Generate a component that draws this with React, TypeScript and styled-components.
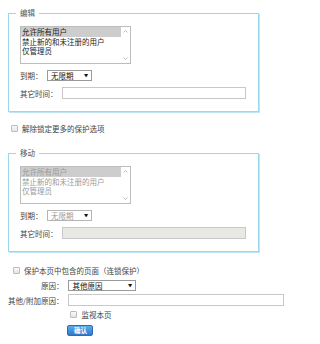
import React from "react";
import styled, { createGlobalStyle } from "styled-components";

const Global = createGlobalStyle`
  html, body { margin: 0; padding: 0; background: #fff; }
  body {
    font-family: "Noto Sans CJK SC", "Noto Sans", sans-serif;
    font-size: 7.5px;
    color: #333;
  }
  * { box-sizing: border-box; }
`;

const Page = styled.div`
  width: 320px;
  height: 344px;
  padding: 8px 0 0 8px;
  display: flex;
  flex-direction: column;
  align-items: flex-start;
`;

const Fieldset = styled.fieldset`
  margin: 0;
  width: 251px;
  padding: 8px 11px 12px 11px;
  border: 1px solid #9cd7f2;
  box-shadow: 1px 1px 0 #bfe6f8;
  display: flex;
  flex-direction: column;
  align-items: flex-start;
  min-inline-size: 0;
`;

const Legend = styled.legend`
  margin-left: -4px;
  padding: 0 4px;
  height: 10px;
  line-height: 10px;
  font-size: 7.5px;
  color: #555;
`;

const ListBox = styled.div<{ $disabled?: boolean }>`
  width: 111px;
  height: 38px;
  border: 1px solid #bdbdbd;
  background: #fff;
  display: flex;
  color: ${(p) => (p.$disabled ? "#9a9a9a" : "#222")};
`;

const Options = styled.div`
  flex: 1;
  display: flex;
  flex-direction: column;
`;

const Option = styled.div<{ $selected?: boolean }>`
  height: 9.5px;
  line-height: 9.5px;
  padding-left: 1px;
  white-space: nowrap;
  background: ${(p) => (p.$selected ? "#cdcdcd" : "transparent")};
`;

const ScrollBar = styled.div`
  width: 9px;
  display: flex;
  flex-direction: column;
  justify-content: space-between;
  align-items: center;
  padding: 3px 0;
`;

const Row = styled.div<{ $mt: number }>`
  display: flex;
  align-items: center;
  height: 12px;
  margin-top: ${(p) => p.$mt}px;
`;

const Label = styled.span`
  white-space: nowrap;
  color: #444;
  margin-right: 4.5px;
`;

const SelectWrap = styled.div<{ $w: number; $disabled?: boolean }>`
  position: relative;
  width: ${(p) => p.$w}px;
  height: 11px;
  border: 1px solid ${(p) => (p.$disabled ? "#b5b5b5" : "#9a9a9a")};
  background: #fff;
  display: flex;
  align-items: center;
  padding-left: 3px;
  color: ${(p) => (p.$disabled ? "#9a9a9a" : "#111")};
  line-height: 9px;
  &::after {
    content: "▼";
    position: absolute;
    right: 2px;
    top: 50%;
    transform: translateY(-50%) scale(0.7);
    font-size: 6px;
    color: #111;
  }
`;

const TextInput = styled.div<{ $w: number; $disabled?: boolean }>`
  width: ${(p) => p.$w}px;
  height: 12px;
  border: 1px solid #c8c8c8;
  background: ${(p) => (p.$disabled ? "#e9e9e3" : "#fff")};
`;

const CheckRow = styled.div<{ $mt: number; $ml: number }>`
  display: flex;
  align-items: center;
  height: 10px;
  margin-top: ${(p) => p.$mt}px;
  margin-left: ${(p) => p.$ml}px;
  color: #444;
`;

const Box = styled.span<{ $gap: number }>`
  width: 7px;
  height: 7px;
  border: 1px solid #bcbcbc;
  border-radius: 1px;
  background: linear-gradient(#fafafa, #e4e4e4);
  margin-right: ${(p) => p.$gap}px;
  flex: none;
`;

const Spacer = styled.div<{ $h: number }>`
  height: ${(p) => p.$h}px;
`;

const FormGrid = styled.div`
  display: grid;
  grid-template-columns: max-content max-content;
  column-gap: 5px;
  row-gap: 3px;
  margin-top: 4px;
  align-items: center;
`;

const GridLabel = styled.span`
  text-align: right;
  white-space: nowrap;
  color: #444;
`;

const Cell = styled.div<{ $h: number; $mt?: number }>`
  display: flex;
  align-items: center;
  height: ${(p) => p.$h}px;
  margin-top: ${(p) => p.$mt ?? 0}px;
`;

const Button = styled.button`
  width: 26px;
  height: 11px;
  padding: 0;
  margin-left: -1px;
  border: 1px solid #2b6db5;
  border-radius: 2px;
  background: linear-gradient(#5eaaea, #2f7acb);
  color: #fff;
  font-family: "Noto Sans CJK SC", sans-serif;
  font-size: 6.5px;
  font-weight: 700;
  line-height: 9px;
`;

const Chevron = ({ up }: { up?: boolean }) => (
  <svg width="5" height="3" viewBox="0 0 5 3">
    <path
      d={up ? "M0.5 2.5 L2.5 0.5 L4.5 2.5" : "M0.5 0.5 L2.5 2.5 L4.5 0.5"}
      fill="none"
      stroke="#b0b0b0"
      strokeWidth="0.8"
    />
  </svg>
);

const Section = ({ title, disabled }: { title: string; disabled?: boolean }) => (
  <Fieldset>
    <Legend>{title}</Legend>
    <ListBox $disabled={disabled}>
      <Options>
        <Option $selected>允许所有用户</Option>
        <Option>禁止新的和未注册的用户</Option>
        <Option>仅管理员</Option>
      </Options>
      <ScrollBar>
        <Chevron up />
        <Chevron />
      </ScrollBar>
    </ListBox>
    <Row $mt={5}>
      <Label>到期：</Label>
      <SelectWrap $w={45} $disabled={disabled}>
        无限期
      </SelectWrap>
    </Row>
    <Row $mt={6}>
      <Label>其它时间：</Label>
      <TextInput $w={184} $disabled={disabled} />
    </Row>
  </Fieldset>
);

export default function App() {
  return (
    <>
      <Global />
      <Page>
        <Section title="编辑" />
        <CheckRow $mt={11} $ml={3}>
          <Box $gap={4} />
          解除锁定更多的保护选项
        </CheckRow>
        <Spacer $h={15} />
        <Section title="移动" disabled />
        <CheckRow $mt={13} $ml={5}>
          <Box $gap={4} />
          保护本页中包含的页面（连锁保护）
        </CheckRow>
        <FormGrid>
          <GridLabel>原因：</GridLabel>
          <Cell $h={12}>
            <SelectWrap $w={68}>其他原因</SelectWrap>
          </Cell>
          <GridLabel>其他/附加原因：</GridLabel>
          <Cell $h={12}>
            <TextInput $w={216} />
          </Cell>
          <span />
          <Cell $h={10}>
            <CheckRow $mt={0} $ml={2}>
              <Box $gap={4} />
              监视本页
            </CheckRow>
          </Cell>
          <span />
          <Cell $h={11} $mt={3}>
            <Button>确认</Button>
          </Cell>
        </FormGrid>
      </Page>
    </>
  );
}
